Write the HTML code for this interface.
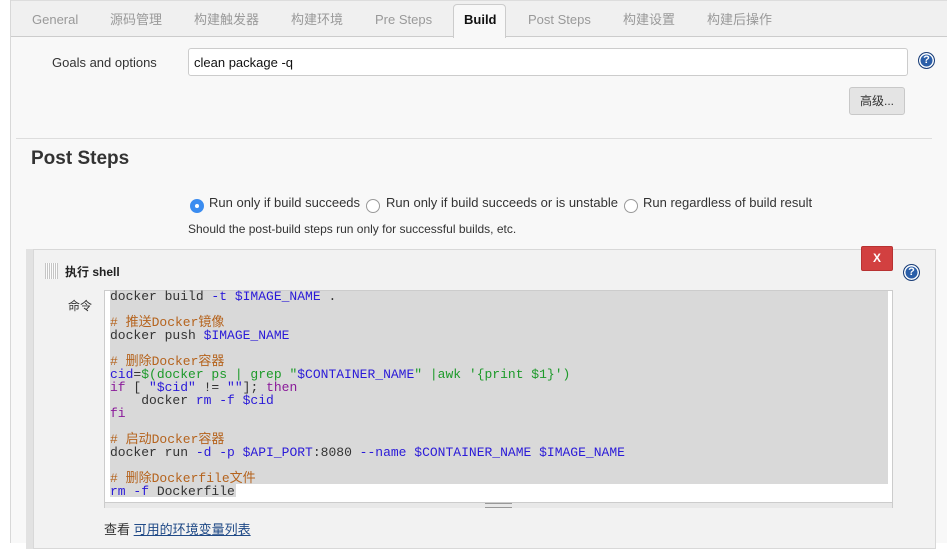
<!DOCTYPE html>
<html><head><meta charset="utf-8"><style>
body{margin:0;width:947px;height:543px;overflow:hidden;background:#fff;font-family:"Liberation Sans","Noto Sans CJK SC",sans-serif;font-size:13px;color:#333;position:relative}
.a{position:absolute}
.main{left:10px;top:0;width:937px;height:543px;background:#f8f8f8;border-left:1px solid #d8d8d8}
.tabs{left:11px;top:0;width:936px;height:37px;background:#f0f0f0;border-bottom:1px solid #ccc;border-top:1px solid #ddd;box-sizing:border-box}
.tab{top:12px;color:#999;font-size:13px;line-height:16px;height:16px}
.help{width:15px;height:15px;border-radius:50%;background:#2a5ea8;border:1px solid #1c3f78;color:#fff;font-weight:bold;font-size:11px;text-align:center;line-height:15px;box-shadow:inset 0 0 0 1.5px #fff}
.code{font-family:"Liberation Mono","Noto Sans CJK SC",monospace;font-size:13px;line-height:13px;white-space:pre;color:#333}
.k{color:#2a1ad8}.c{color:#b5631d}.g{color:#1d9a2a}.p{color:#8a1a9a}
.radio{width:12px;height:12px;border-radius:50%;border:1px solid #999;background:#fff}
</style></head><body>
<div class="a main"></div>
<div class="a tabs"></div>
<div class="a tab" style="left:32px">General</div>
<div class="a tab" style="left:110px;top:12px">源码管理</div>
<div class="a tab" style="left:194px;top:12px">构建触发器</div>
<div class="a tab" style="left:291px;top:12px">构建环境</div>
<div class="a tab" style="left:375px">Pre Steps</div>
<div class="a" style="left:453px;top:4px;width:53px;height:34px;background:#f8f8f8;border:1px solid #ccc;border-bottom:none;border-radius:4px 4px 0 0;box-sizing:border-box"></div>
<div class="a" style="left:464px;top:12px;font-weight:bold;color:#111;line-height:16px">Build</div>
<div class="a tab" style="left:528px">Post Steps</div>
<div class="a tab" style="left:623px;top:12px">构建设置</div>
<div class="a tab" style="left:707px;top:12px">构建后操作</div>

<div class="a" style="left:52px;top:55px">Goals and options</div>
<div class="a" style="left:188px;top:48px;width:720px;height:28px;background:#fff;border:1px solid #ccc;border-radius:3px;box-sizing:border-box;padding:6px 5px;color:#111">clean package -q</div>
<div class="a help" style="left:918px;top:52px">?</div>
<div class="a" style="left:849px;top:87px;width:56px;height:28px;background:#e4e4e4;border:1px solid #c8c8c8;border-radius:3px;box-sizing:border-box;text-align:center;line-height:26px;font-size:12px">高级...</div>
<div class="a" style="left:16px;top:138px;width:916px;border-top:1px solid #ddd"></div>
<div class="a" style="left:31px;top:148px;font-size:19px;font-weight:bold;color:#333">Post Steps</div>

<div class="a radio" style="left:190px;top:199px;background:#3b8cf0;border-color:#3b8cf0"><div style="width:4px;height:4px;background:#fff;border-radius:50%;margin:4px"></div></div>
<div class="a" style="left:209px;top:195px">Run only if build succeeds</div>
<div class="a radio" style="left:366px;top:199px"></div>
<div class="a" style="left:386px;top:195px">Run only if build succeeds or is unstable</div>
<div class="a radio" style="left:624px;top:199px"></div>
<div class="a" style="left:643px;top:195px">Run regardless of build result</div>
<div class="a" style="left:188px;top:222px;font-size:12px">Should the post-build steps run only for successful builds, etc.</div>

<div class="a" style="left:26px;top:249px;width:910px;height:300px;background:#e2e2e2"></div>
<div class="a" style="left:33px;top:249px;width:903px;height:300px;background:#f2f2f2;border:1px solid #d8d8d8;box-sizing:border-box"></div>
<div class="a" style="left:45px;top:263px;width:13px;height:16px;background:repeating-linear-gradient(90deg,#bbb 0 1px,transparent 1px 2px),#fff;opacity:.8"></div>
<div class="a" style="left:65px;top:263px;font-weight:bold;font-size:12px;color:#222">执行 shell</div>
<div class="a" style="left:861px;top:246px;width:32px;height:25px;background:#d24040;border:1px solid #b83232;border-radius:2px;box-sizing:border-box;color:#fff;text-align:center;line-height:23px;font-size:12px;font-weight:bold">X</div>
<div class="a help" style="left:903px;top:264px">?</div>
<div class="a" style="left:68px;top:297px;font-size:12px">命令</div>

<div class="a" style="left:104px;top:290px;width:789px;height:218px;background:#fff;border:1px solid #ccc;box-sizing:border-box"></div>
<div class="a" style="left:110px;top:291px;width:778px;height:193px;background:#d9d9d9"></div>
<div class="a" style="left:110px;top:484px;width:126px;height:13px;background:#d9d9d9"></div>
<div class="a" style="left:105px;top:502px;width:787px;height:5px;background:#e8e8e8;border-top:1px solid #ccc"></div>
<div class="a" style="left:485px;top:503px;width:27px;height:3px;border-top:1px solid #999;border-bottom:1px solid #999"></div>
<div class="a code" style="left:110px;top:290px">docker build <span class="k">-t $IMAGE_NAME</span> .

<span class="c"># 推送Docker镜像</span>
docker push <span class="k">$IMAGE_NAME</span>

<span class="c"># 删除Docker容器</span>
<span class="k">cid</span>=<span class="g">$(docker ps | grep "<span class="k">$CONTAINER_NAME</span>" |awk '{print $1}')</span>
<span class="p">if</span> [ <span class="k">"$cid"</span> != <span class="k">""</span>]; <span class="p">then</span>
    docker <span class="k">rm -f $cid</span>
<span class="p">fi</span>

<span class="c"># 启动Docker容器</span>
docker run <span class="k">-d -p $API_PORT</span>:8080 <span class="k">--name $CONTAINER_NAME $IMAGE_NAME</span>

<span class="c"># 删除Dockerfile文件</span>
<span class="k">rm -f</span> Dockerfile</div>
<div class="a" style="left:104px;top:519px">查看 <span style="color:#204a87;text-decoration:underline">可用的环境变量列表</span></div>
</body></html>
